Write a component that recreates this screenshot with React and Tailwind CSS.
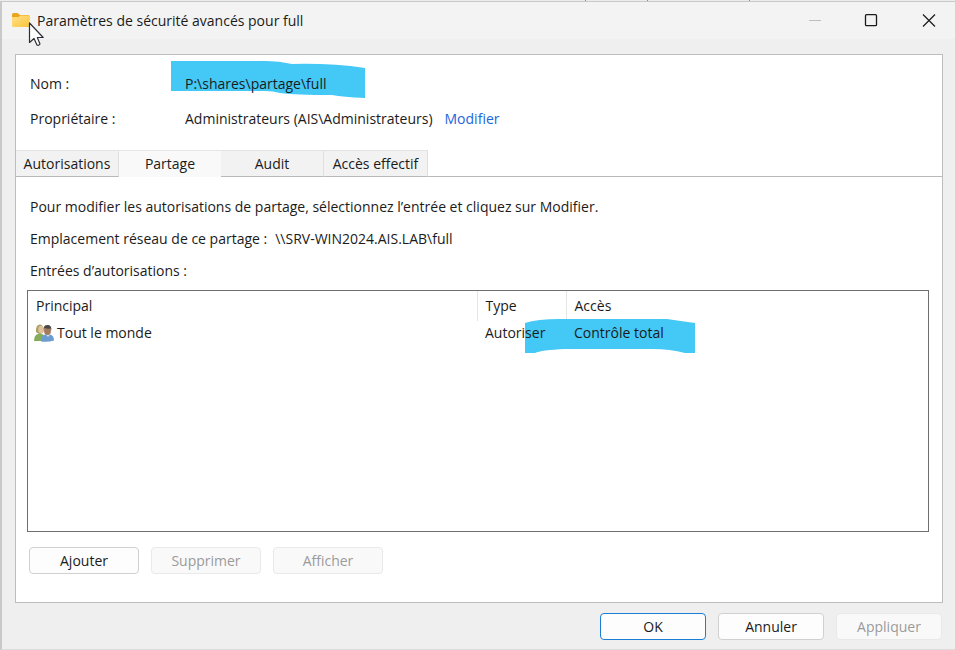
import React from "react";

function FolderIcon() {
  return (
    <svg width="20" height="18" viewBox="0 0 20 18" className="shrink-0" aria-hidden="true">
      <defs>
        <linearGradient id="folder" x1="0" y1="0" x2="1" y2="1">
          <stop offset="0" stopColor="#ffe08a" />
          <stop offset="1" stopColor="#f9c53c" />
        </linearGradient>
      </defs>
      <path d="M1 2.500Q1 1 2.500 1H6.500L9 3H17Q18.500 3 18.500 4.500V8H1Z" fill="#eba51d" />
      <path d="M1 6Q1 5 2 5H7.500L9.500 3.500H17.500Q18.500 3.500 18.500 4.500V13.500Q18.500 15 17 15H2.500Q1 15 1 13.500Z" fill="url(#folder)" />
    </svg>
  );
}

function Pointer() {
  return (
    <svg width="17" height="26" viewBox="0 0 17 26" className="pointer-events-none absolute left-[26px] top-[19px]" aria-hidden="true">
      <path d="M1.500 2V21.500L6 17.500L9 24Q10.500 25 12 23L9.300 16.500H15.200Z" fill="#fff" stroke="#2e2e38" strokeWidth="1.200" strokeLinejoin="round" />
    </svg>
  );
}

function PeopleIcon() {
  return (
    <svg width="20" height="18" viewBox="0 0 20 18" className="shrink-0" aria-hidden="true">
      <path d="M0 17Q0 11 4 10H8Q11 11 11 17Z" fill="#84ac5a" />
      <path d="M2 8Q1.500 0.500 6 0.500Q10 0.500 9.500 8Q6 12 2 8Z" fill="#a9a06a" />
      <ellipse cx="7" cy="5.500" rx="2.700" ry="3.700" fill="#e0c39a" />
      <path d="M7 17.500Q7 11.500 11 10.500H16Q20 11.500 20 16.500Q14 18.500 7 17.500Z" fill="#6b9bd0" />
      <path d="M12 10.500L14 13L16 10.500Z" fill="#d5e5f4" />
      <ellipse cx="13.500" cy="6.500" rx="3.500" ry="4.500" fill="#a57b5f" />
      <path d="M9.800 6Q9 1 13.500 1Q18 1 17.300 6.500L16.500 4.500Q13 5 10.800 3.800Z" fill="#4c4944" />
    </svg>
  );
}

function Tab({ selected, className, children }) {
  return (
    <button
      type="button"
      role="tab"
      aria-selected={selected}
      className={
        (selected
          ? "border-t border-b border-t-[#e6e6e6] border-b-[#f9f9f9] bg-[#f9f9f9] "
          : "border-t border-r border-b border-t-[#e3e3e3] border-r-[#e0e0e0] border-b-[#b9b9b9] bg-[#f2f2f2] ") + "h-[27px] " + className
      }
    >
      {children}
    </button>
  );
}

function Button({ primary, disabled, className, children }) {
  const look = disabled
    ? "border-[#e9e9e9] bg-[#f9f9f9] text-[#9b9b9b]"
    : primary
      ? "border-[#1a7fd4] bg-[#fdfdfd]"
      : "border-[#d0d0d0] bg-[#fdfdfd]";
  return (
    <button type="button" disabled={disabled} className={"h-[27px] rounded border " + look + " " + className}>
      {children}
    </button>
  );
}

export default function App() {
  return (
    <div className="flex min-h-screen flex-col bg-[#efefef] font-['Open_Sans','Noto_Sans',sans-serif] text-sm leading-5 text-[#1b1b1b]">
      <div className="flex h-px bg-[#ececec]" aria-hidden="true">
        <div className="w-[586px] border-r border-[#888]" />
        <div className="w-[62px] border-r border-[#888]" />
        <div className="w-[102px] border-r border-[#888]" />
      </div>
      <div className="flex grow flex-col border-y border-l-2 border-[#c9c9c9] border-b-[#dcdcdc]">
        <header className="relative flex h-[37px] items-center bg-[#f3f3f3] pl-[9px]">
          <FolderIcon />
          <h1 className="ml-[6px] grow">Paramètres de sécurité avancés pour full</h1>
          <button type="button" aria-label="Réduire" disabled className="flex h-9 w-14 items-center justify-center">
            <svg width="14" height="14" viewBox="0 0 14 14"><path d="M1 6.500H13" stroke="#bdbdbd" /></svg>
          </button>
          <button type="button" aria-label="Agrandir" className="flex h-9 w-14 items-center justify-center">
            <svg width="14" height="14" viewBox="0 0 14 14"><rect x="1.500" y="0.700" width="11" height="11" rx="1" fill="none" stroke="#1b1b1b" strokeWidth="1.300" /></svg>
          </button>
          <button type="button" aria-label="Fermer" className="flex h-9 w-14 items-center justify-center pl-1">
            <svg width="14" height="14" viewBox="0 0 14 14"><path d="M1 0.500L13 12.500M13 0.500L1 12.500" stroke="#1b1b1b" strokeWidth="1.200" /></svg>
          </button>
          <Pointer />
        </header>

        <main className="mx-[13px] mr-3 mt-[15px] flex grow flex-col border border-[#bdbdbd] bg-white">
          <dl className="grid grid-cols-[155px_1fr] gap-y-[15px] px-[14px] pt-[19px]">
            <dt>Nom :</dt>
            <dd className="relative isolate">
              <svg width="195" height="38" viewBox="0 0 195 38" className="absolute -left-[14px] -top-[14px] -z-10" aria-hidden="true">
                <path d="M0 1H95Q108 1 121 4Q160 3 194 8V38Q172 37 161 35Q125 35 109 33Q102 31 94 31H0Z" fill="#44c8f5" />
              </svg>
              P:\shares\partage\full
            </dd>
            <dt>Propriétaire :</dt>
            <dd className="flex gap-3">
              <span>Administrateurs (AIS\Administrateurs)</span>
              <a href="#modifier" className="text-[#1a66dc]">Modifier</a>
            </dd>
          </dl>

          <div role="tablist" className="mt-[21px] flex">
            <Tab className="w-[103px]">Autorisations</Tab>
            <Tab selected className="w-[102px]">Partage</Tab>
            <Tab className="w-[103px]">Audit</Tab>
            <Tab className="w-[104px]">Accès effectif</Tab>
            <div className="grow border-b border-[#b9b9b9]" />
          </div>

          <section role="tabpanel" className="flex grow flex-col px-[11px] pb-7">
            <div className="flex flex-col gap-3 px-[3px] pt-5">
              <p>Pour modifier les autorisations de partage, sélectionnez l’entrée et cliquez sur Modifier.</p>
              <p className="flex gap-2">
                <span>Emplacement réseau de ce partage :</span>
                <span>\\SRV-WIN2024.AIS.LAB\full</span>
              </p>
              <p>Entrées d’autorisations :</p>
            </div>
            <div className="mr-[2px] mt-[9px] grow border border-[#6f6f6f]">
              <table className="w-full table-fixed border-collapse text-left">
                <thead>
                  <tr className="h-[30px]">
                    <th className="w-[449px] border-r border-[#e5e5e5] pl-2 font-normal">Principal</th>
                    <th className="w-[89px] border-r border-[#e5e5e5] pl-2 font-normal">Type</th>
                    <th className="pl-2 font-normal">Accès</th>
                  </tr>
                </thead>
                <tbody>
                  <tr className="h-6">
                    <td className="pl-[6px]">
                      <span className="flex items-center gap-[3px]"><PeopleIcon />Tout le monde</span>
                    </td>
                    <td className="relative z-10 pl-2">Autoriser</td>
                    <td className="relative pl-2">
                      <svg width="170" height="34" viewBox="0 0 170 34" className="absolute -left-[41px] -top-[2px]" aria-hidden="true">
                        <path d="M0 4Q12 0 35 0H142Q155 2 170 4V34H160Q145 30 128 30H40Q16 31 10 34H0Z" fill="#44c8f5" />
                      </svg>
                      <span className="relative">Contrôle total</span>
                    </td>
                  </tr>
                </tbody>
              </table>
            </div>
            <div className="mt-[15px] flex gap-3 px-[2px]">
              <Button className="w-[110px]">Ajouter</Button>
              <Button disabled className="w-[110px]">Supprimer</Button>
              <Button disabled className="w-[110px]">Afficher</Button>
            </div>
          </section>
        </main>

        <footer className="flex justify-end gap-3 pb-[9px] pr-[13px] pt-[10px]">
          <Button primary className="w-[106px]">OK</Button>
          <Button className="w-[106px]">Annuler</Button>
          <Button disabled className="w-[106px]">Appliquer</Button>
        </footer>
      </div>
    </div>
  );
}
